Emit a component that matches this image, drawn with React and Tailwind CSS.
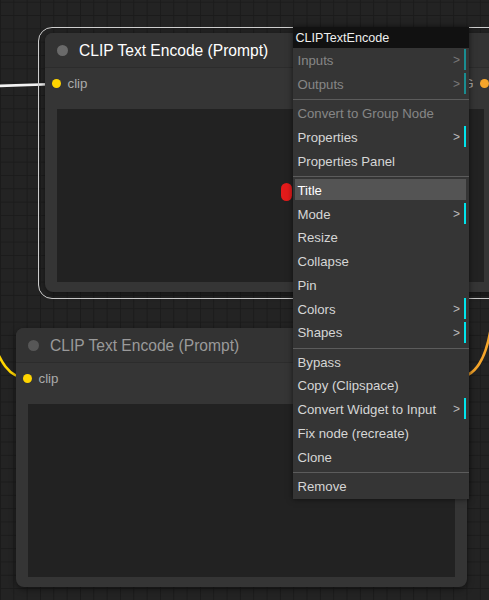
import React from "react";

const menuItems = [
  { label: "Inputs", sub: true, disabled: true },
  { label: "Outputs", sub: true, disabled: true },
  null,
  { label: "Convert to Group Node", disabled: true },
  { label: "Properties", sub: true },
  { label: "Properties Panel" },
  null,
  { label: "Title", active: true },
  { label: "Mode", sub: true },
  { label: "Resize" },
  { label: "Collapse" },
  { label: "Pin" },
  { label: "Colors", sub: true },
  { label: "Shapes", sub: true },
  null,
  { label: "Bypass" },
  { label: "Copy (Clipspace)" },
  { label: "Convert Widget to Input", sub: true },
  { label: "Fix node (recreate)" },
  { label: "Clone" },
  null,
  { label: "Remove" },
];

const Node = ({ className, selected }) => (
  <div
    className={`absolute flex w-[451px] h-[259px] flex-col rounded-[8px] bg-[#353535] shadow-[0_2px_6px_rgba(0,0,0,0.5)] ${className}`}
  >
    {/* title */}
    <div className="flex h-[35px] items-center gap-[11.5px] rounded-t-[8px] border-b border-[#2c2c2c] bg-[#333] pl-[11.5px]">
      <div
        className={`h-[11px] w-[11px] rounded-full ${selected ? "bg-[#6a6a6a]" : "bg-[#575757]"}`}
      />
      <span
        className={`pt-[2px] text-[15.6px] leading-none ${selected ? "text-white" : "text-[#9a9a9a]"}`}
      >
        CLIP Text Encode (Prompt)
      </span>
    </div>

    {/* slots */}
    <div className="flex h-[31px] items-center justify-between px-[7px]">
      <div className="flex items-center gap-[6.5px]">
        <div className="h-[9px] w-[9px] rounded-full bg-[#ffd500]" />
        <span className="pt-[1px] text-[13.3px] leading-none text-[#aaa]">clip</span>
      </div>
      <div className="flex items-center gap-[6.5px]">
        <span className="pt-[1px] text-[13.3px] leading-none text-[#aaa]">CONDITIONING</span>
        <div className="h-[9px] w-[9px] rounded-full bg-[#f5a52b]" />
      </div>
    </div>

    {/* text widget */}
    <div className="mx-[12px] mb-[10px] mt-[10px] flex-1 bg-[#222]" />
  </div>
);

const ContextMenu = () => (
  <div className="absolute left-[293px] top-[27px] flex w-[176px] flex-col bg-[#353535] pb-[0.5px] shadow-[0_0_6px_rgba(0,0,0,0.6)]">
    <div className="flex h-[21px] items-center bg-[#111] pl-[2.5px] pt-[1px] text-[12.6px] leading-none text-[#eee]">
      CLIPTextEncode
    </div>
    <div className="flex flex-col pt-[1.3px]">
      {menuItems.map((item, i) =>
        item === null ? (
          <div key={i} className="mb-[2px] mt-[2.5px] h-px bg-[#5c5c5c]" />
        ) : (
          <div
            key={i}
            className={`relative mb-[2.75px] ml-[2px] mr-[3px] flex h-[21px] items-center pl-[2.5px] pt-[2px] text-[13.2px] leading-none ${
              item.active ? "bg-[#545454] text-white" : "text-[#d6d6d6]"
            } ${item.sub ? "border-r-2 border-[#00e4ec]" : ""} ${item.disabled ? "opacity-50" : ""}`}
          >
            {item.label}
            {item.sub && (
              <span className="absolute right-[4px] top-[5px] text-[12px] leading-none text-[#bbb]">
                &gt;
              </span>
            )}
          </div>
        )
      )}
    </div>
  </div>
);

export default function App() {
  return (
    <div
      className="relative h-[600px] w-[489px] overflow-hidden bg-[#232323] bg-[linear-gradient(to_right,#1b1b1b_1px,transparent_1px),linear-gradient(to_bottom,#1b1b1b_1px,transparent_1px)] bg-[size:13.33px_13.33px] bg-[position:0px_1.7px]"
      style={{ fontFamily: '"Liberation Sans", Arial, sans-serif' }}
    >
      {/* links */}
      <svg className="absolute inset-0" width="489" height="600" viewBox="0 0 489 600">
        <path d="M -4 86 L 56 84" stroke="#f2f2f2" strokeWidth="2.6" fill="none" />
        <path d="M -8 340 C 0 360, 8 378, 27 378" stroke="#ffd500" strokeWidth="2.6" fill="none" />
        <path d="M 455 378 C 475 378, 487 360, 492 320" stroke="#f5a52b" strokeWidth="2.6" fill="none" />
      </svg>

      {/* selection outline */}
      <div className="absolute left-[38px] top-[27px] h-[272px] w-[466px] rounded-[14px] border border-[#cfcfcf]" />

      <Node className="left-[45px] top-[33px]" selected />
      <Node className="left-[16px] top-[328px]" />

      <div className="absolute left-[281px] top-[183px] h-[18px] w-[11px] rounded-full bg-[#e31b1b]" />

      <ContextMenu />
    </div>
  );
}
